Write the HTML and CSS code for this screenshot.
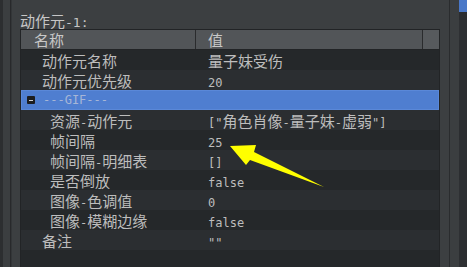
FILE: index.html
```html
<!DOCTYPE html>
<html>
<head>
<meta charset="utf-8">
<link rel="stylesheet" href="styles.css">
</head>
<body>
<div class="strip-a"></div>
<div class="strip-b"></div>
<div class="strip-c"></div>
<div class="panel">
  <div class="title">动作元<span class="m">-1:</span></div>
  <div class="table">
    <div class="head">
      <div class="hcell hname">名称</div>
      <div class="hsep"></div>
      <div class="hcell hval">值</div>
      <div class="hsep"></div>
      <div class="hcorner"></div>
    </div>
    <div class="rows">
      <div class="row"><div class="name l1">动作元名称</div><div class="val">量子妹受伤</div></div>
      <div class="row"><div class="name l1">动作元优先级</div><div class="val"><span class="m">20</span></div></div>
      <div class="row group"><div class="name lg"><span class="toggle"><span class="minus"></span></span><span class="m gtext">---GIF---</span></div></div>
      <div class="row"><div class="name l2">资源<span class="m">-</span>动作元</div><div class="val"><span class="m">["</span>角色肖像<span class="m">-</span>量子妹<span class="m">-</span>虚弱<span class="m">"]</span></div></div>
      <div class="row"><div class="name l2">帧间隔</div><div class="val"><span class="m">25</span></div></div>
      <div class="row"><div class="name l2">帧间隔<span class="m">-</span>明细表</div><div class="val"><span class="m">[]</span></div></div>
      <div class="row"><div class="name l2">是否倒放</div><div class="val"><span class="m">false</span></div></div>
      <div class="row"><div class="name l2">图像<span class="m">-</span>色调值</div><div class="val"><span class="m">0</span></div></div>
      <div class="row"><div class="name l2">图像<span class="m">-</span>模糊边缘</div><div class="val"><span class="m">false</span></div></div>
      <div class="row"><div class="name l1">备注</div><div class="val"><span class="m">""</span></div></div>
      <div class="row"><div class="name"></div><div class="val"></div></div>
    </div>
  </div>
</div>
<div class="divider"></div>
<div class="gray2"></div>
<div class="rpanel"><div class="rtop"></div></div>
<svg class="arrow" width="467" height="267" viewBox="0 0 467 267">
  <polygon points="230,146 256,145 254,152 324,187 250,160 246,165" fill="#ffff00"/>
</svg>
</body>
</html>
```
FILE: styles.css
```css
html, body {
  margin: 0;
  padding: 0;
}
body {
  width: 467px;
  height: 267px;
  overflow: hidden;
  background: #3c3f41;
  display: flex;
  position: relative;
  font-family: "Noto Sans CJK SC", "DejaVu Sans", sans-serif;
  font-size: 15px;
  color: #bdbdbd;
}
.m {
  font-family: "DejaVu Sans Mono", "Liberation Mono", monospace;
  font-size: 12px;
}
.strip-a { width: 3px; background: #2c2e30; }
.strip-b { width: 7px; background: #3b3e40; }
.strip-c { width: 1px; background: #28292b; border-right: 1px solid #333638; }
.panel {
  width: 437px;
  padding: 12px 9px 0 8px;
  box-sizing: border-box;
  display: flex;
  flex-direction: column;
}
.title {
  height: 17px;
  line-height: 17px;
  color: #c6c6c6;
  white-space: nowrap;
}
.title .m { font-size: 13px; }
.table {
  flex: 1;
  border: 1px solid #222426;
  border-bottom: none;
  background: #25282a;
  display: flex;
  flex-direction: column;
}
.head {
  height: 19px;
  display: flex;
  background: #525558;
  border-bottom: 1px solid #222426;
}
.hcell {
  line-height: 19px;
  color: #c8c8c8;
  white-space: nowrap;
}
.hname { width: 174px; padding-left: 13px; box-sizing: border-box; }
.hval { width: 226px; padding-left: 12px; box-sizing: border-box; }
.hsep { width: 1px; background: #2a2b2d; }
.hcorner { flex: 1; background: #575a5d; }
.rows { display: flex; flex-direction: column; }
.row {
  height: 20px;
  display: grid;
  grid-template-columns: 175px 1fr;
  background: #25282a;
  line-height: 22px;
  white-space: nowrap;
}
.row:nth-child(even) { background: #2b2e31; }
.row.group {
  background: #4f7ed0;
  box-shadow: inset 0 0 0 1px #5a88d8;
}
.name { overflow: visible; }
.l1 { padding-left: 21px; }
.l2 { padding-left: 29px; }
.lg { padding-left: 6px; display: flex; align-items: center; height: 20px; }
.val { padding-left: 12px; }
.toggle {
  width: 8px;
  height: 8px;
  background: #1c1d1f;
  border-radius: 1px;
  display: flex;
  align-items: center;
  justify-content: center;
  margin-right: 8px;
}
.minus { width: 4px; height: 1px; background: #cfcfcf; }
.gtext { color: #a7b6d6; line-height: 20px; }
.divider { width: 1px; background: #2a2c2e; }
.gray2 { width: 9px; background: #3b3e40; }
.rpanel {
  flex: 1;
  background: repeating-linear-gradient(#2b2d30 0 20px, #2e3033 20px 40px);
}
.rtop { height: 12px; background: #4a78c8; }
.arrow { position: absolute; left: 0; top: 0; pointer-events: none; }
```
